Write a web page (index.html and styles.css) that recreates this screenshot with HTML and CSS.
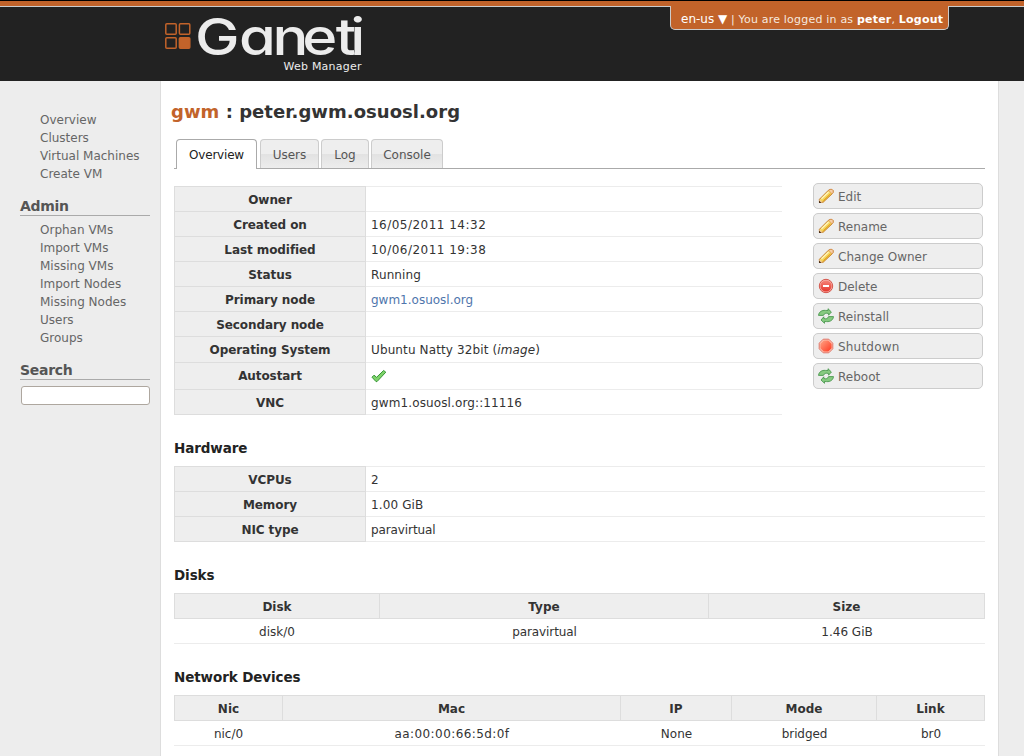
FILE: index.html
```html
<!DOCTYPE html>
<html lang="en">
<head>
<meta charset="utf-8">
<title>Ganeti Web Manager</title>
<link rel="stylesheet" href="styles.css">
</head>
<body>
<svg class="defs" width="0" height="0">
  <defs>
    <linearGradient id="gold" x1="0" y1="0" x2="1" y2="1"><stop offset="0" stop-color="#fff3a0"/><stop offset="1" stop-color="#edb620"/></linearGradient>
    <linearGradient id="red" x1="0" y1="0" x2="1" y2="1"><stop offset="0" stop-color="#ffa485"/><stop offset="1" stop-color="#ff3820"/></linearGradient>
    <linearGradient id="crimson" x1="0" y1="0" x2="0" y2="1"><stop offset="0" stop-color="#f58478"/><stop offset="1" stop-color="#e5372e"/></linearGradient>
    <symbol id="pencil" viewBox="0 0 16 16">
      <path d="M1.4 14.4V11.3L10.5 2.2L12 1.4H14L15.1 2.5V4.3L14.3 5.6L5.2 14.2Z" fill="url(#gold)" stroke="#c57a25"/>
      <path d="M10.6 2.3L12 1.5H14L15 2.6V4.3L13.9 5.6Z" fill="#f7cfa8" stroke="#d58b52" stroke-width=".6"/>
      <path d="M3.5 10.8L10.5 4" stroke="#fff7bd" stroke-width="1.2"/>
      <path d="M5.3 12.8L12.3 6" stroke="#e2a619" stroke-width="1"/>
      <path d="M1.3 11.5L4.6 14.3L1 15Z" fill="#f3cda0"/>
      <path d="M1 12.5L3.4 15H1Z" fill="#4b2c13"/>
    </symbol>
    <symbol id="minus" viewBox="0 0 16 16">
      <circle cx="8" cy="8" r="6.7" fill="#f7b1a8" stroke="#d4564c"/>
      <circle cx="8" cy="8" r="5.6" fill="url(#crimson)"/>
      <rect x="5" y="7" width="6" height="2" fill="#fff"/>
    </symbol>
    <symbol id="stop" viewBox="0 0 16 16">
      <path d="M5.2 1.2H10.8L14.8 5.2V10.8L10.8 14.8H5.2L1.2 10.8V5.2Z" fill="#ffc3b0" stroke="#dd6a5c" stroke-width=".9"/>
      <path d="M5.7 2.4H10.3L13.6 5.7V10.3L10.3 13.6H5.7L2.4 10.3V5.7Z" fill="url(#red)"/>
    </symbol>
    <symbol id="cycle" viewBox="0 0 16 16">
      <path d="M.5 7.4C.8 3.9 4 2 7.3 2.4L10 2.5V.7L13.4 4L10.6 7.2V5.6C7.8 4.7 6.4 5.3 5.4 7.4Z" fill="#86ca80" stroke="#3f9144" stroke-width=".8" stroke-linejoin="round"/>
      <path d="M15.5 8.6C15.2 12.1 12 14 8.7 13.6L6.5 13.5V15.3L3 12L5.8 8.8V10.4C8.2 11.3 9.6 10.7 10.6 8.6Z" fill="#86ca80" stroke="#3f9144" stroke-width=".8" stroke-linejoin="round"/>
    </symbol>
    <symbol id="tick" viewBox="0 0 16 16">
      <path d="M1 9.2L3 7.2L5.6 9.3L12.6 2.5L14.8 4.2L6 13.6H5Z" fill="#7fd36a" stroke="#349535" stroke-linejoin="round"/>
    </symbol>
  </defs>
</svg>
<header class="header">
  <div class="logo">
    <svg width="200" height="70" viewBox="0 0 200 70">
      <g fill="none" stroke="#c2632a" stroke-width="1.5">
        <rect x="1.8" y="17.8" width="10.4" height="10.4" rx="1"/>
        <rect x="15.4" y="17.8" width="10.4" height="10.4" rx="1"/>
        <rect x="1.8" y="31.8" width="10.4" height="10.4" rx="1"/>
        <rect x="15.4" y="31.8" width="10.4" height="10.4" rx="1" fill="#c2632a"/>
      </g>
      <text class="wordmark" transform="scale(1.17 1)" x="26.5 64.2 92.8 118.2 146.8 159.3" y="48.6">Ganeti</text>
      <text class="tagline" x="119.5" y="63.5" textLength="78">Web Manager</text>
    </svg>
  </div>
  <div class="user"><span class="lang">en-us ▼</span> | You are logged in as <b>peter</b>, <b>Logout</b></div>
</header>
<div class="page">
  <nav class="sidebar">
    <ul><li>Overview</li><li>Clusters</li><li>Virtual Machines</li><li>Create VM</li></ul>
    <h3>Admin</h3>
    <ul><li>Orphan VMs</li><li>Import VMs</li><li>Missing VMs</li><li>Import Nodes</li><li>Missing Nodes</li><li>Users</li><li>Groups</li></ul>
    <h3>Search</h3>
    <input class="search" type="text" aria-label="Search">
  </nav>
  <main class="content">
    <h1><span>gwm</span> : peter.gwm.osuosl.org</h1>
    <div class="tabs"><a class="tab active">Overview</a><a class="tab users">Users</a><a class="tab log">Log</a><a class="tab console">Console</a></div>
    <div class="top">
      <table class="props">
        <tr><th>Owner</th><td></td></tr>
        <tr><th>Created on</th><td class="date">16/05/2011 14:32</td></tr>
        <tr><th>Last modified</th><td class="date">10/06/2011 19:38</td></tr>
        <tr><th>Status</th><td class="loose">Running</td></tr>
        <tr><th>Primary node</th><td><a class="link">gwm1.osuosl.org</a></td></tr>
        <tr><th>Secondary node</th><td></td></tr>
        <tr class="os"><th>Operating System</th><td class="loose">Ubuntu Natty 32bit (<i>image</i>)</td></tr>
        <tr class="auto"><th>Autostart</th><td><svg class="icon"><use href="#tick"/></svg></td></tr>
        <tr><th>VNC</th><td class="loose">gwm1.osuosl.org::11116</td></tr>
      </table>
      <div class="actions">
        <a class="action"><svg class="icon"><use href="#pencil"/></svg>Edit</a>
        <a class="action"><svg class="icon"><use href="#pencil"/></svg>Rename</a>
        <a class="action"><svg class="icon"><use href="#pencil"/></svg>Change Owner</a>
        <a class="action"><svg class="icon"><use href="#minus"/></svg>Delete</a>
        <a class="action"><svg class="icon"><use href="#cycle"/></svg>Reinstall</a>
        <a class="action shutdown"><svg class="icon"><use href="#stop"/></svg>Shutdown</a>
        <a class="action"><svg class="icon"><use href="#cycle"/></svg>Reboot</a>
      </div>
    </div>
    <h2>Hardware</h2>
    <table class="props wide">
      <tr><th>VCPUs</th><td>2</td></tr>
      <tr><th>Memory</th><td class="loose">1.00 GiB</td></tr>
      <tr><th>NIC type</th><td class="tight">paravirtual</td></tr>
    </table>
    <h2>Disks</h2>
    <table class="list">
      <colgroup><col class="disk"><col class="type"><col></colgroup>
      <tr><th>Disk</th><th>Type</th><th>Size</th></tr>
      <tr><td>disk/0</td><td class="tight">paravirtual</td><td>1.46 GiB</td></tr>
    </table>
    <h2>Network Devices</h2>
    <table class="list">
      <colgroup><col class="nic"><col class="mac"><col class="ip"><col class="mode"><col></colgroup>
      <tr><th>Nic</th><th>Mac</th><th>IP</th><th>Mode</th><th>Link</th></tr>
      <tr><td>nic/0</td><td class="address">aa:00:00:66:5d:0f</td><td>None</td><td class="tight">bridged</td><td>br0</td></tr>
    </table>
  </main>
</div>
</body>
</html>
```
FILE: styles.css
```css
* { box-sizing: border-box; }
html, body { height: 756px; overflow: hidden; }
body { margin: 0; background: #ededed; color: #333; font: 12px/18px "DejaVu Sans", sans-serif; }
.defs { position: absolute; }
.header { height: 81px; background: linear-gradient(#000 0 1px, #c2632a 1px 6px, #ccc 6px 7px, #222 7px); display: flex; align-items: flex-start; padding: 6px 75px 0 164px; justify-content: space-between; }
.logo svg { display: block; overflow: visible; }
.wordmark { font: 500 51px Inter, sans-serif; font-feature-settings: "cv11"; fill: #ececec; }
.tagline { font: 11px "DejaVu Sans", sans-serif; fill: #ececec; }
.user { width: 279px; height: 24px; background: #c2632a; border: 1px solid #ccc; border-top: 0; border-radius: 0 0 5px 5px; color: #f5e8df; font-size: 11px; letter-spacing: 0.2px; line-height: 26px; padding-left: 10px; white-space: nowrap; }
.user b { color: #fff; }
.lang { font-size: 12px; letter-spacing: 0; color: #fff; }
.page { display: flex; height: 675px; }
.sidebar { width: 160px; padding: 30px 10px 0 20px; color: #666; }
.sidebar ul { list-style: none; margin: 0; padding: 0 0 0 20px; }
.sidebar h3 { font-size: 14px; line-height: 18px; height: 19px; margin: 14px 0 5px; border-bottom: 1px solid #aaa; color: #555; letter-spacing: -0.3px; }
.sidebar h3 + .search { margin-top: 6px; }
.search { display: block; width: 129px; height: 19px; margin-left: 1px; border: 1px solid #aea79f; border-radius: 3px; background: #fff; }
.content { width: 839px; background: #fff; border: solid #ddd; border-width: 0 1px; padding: 20px 13px 0; }
h1 { margin: 0 0 0 -3px; font-size: 18px; line-height: 22px; color: #333; letter-spacing: 0.03px; }
h1 span { color: #c2632a; }
.tabs { display: flex; gap: 2px; height: 30px; margin-top: 16px; padding-left: 2px; border-bottom: 1px solid #aaa; }
.tab { height: 29px; line-height: 30px; text-align: center; border: 1px solid #ccc; border-bottom: 0; border-radius: 4px 4px 0 0; background: linear-gradient(#eee 50%, #e2e2e2 50%, #ededed); color: #555; }
.active { width: 81px; height: 30px; background: #fff; border-color: #aaa; color: #222; margin-right: 1px; letter-spacing: -0.2px; }
.users { width: 59px; }
.log { width: 48px; }
.console { width: 72px; }
.top { display: flex; justify-content: space-between; padding: 14px 2px 0 0; }
table { border-collapse: separate; border-spacing: 0; table-layout: fixed; }
.props { width: 608px; margin-top: 3px; border-top: 1px solid #ececec; }
.props tr { height: 25px; }
.props .os { height: 26px; }
.props .auto { height: 27px; }
th, td { padding: 2px 5px 0; height: inherit; border-bottom: 1px solid #ececec; text-align: left; line-height: 17px; }
.os th, .os td { padding-top: 1px; }
.auto th, .auto td { padding-top: 0; }
th { background: #eee; border-bottom-color: #ddd; text-align: center; }
.props th { width: 192px; border-left: 1px solid #ddd; border-right: 1px solid #ddd; letter-spacing: -0.08px; }
.props tr:first-child th { box-shadow: 0 -1px #ddd; }
.wide { width: 811px; margin-top: 0; }
.link { color: #4f76ac; }
.date { letter-spacing: 0.48px; }
.address { letter-spacing: 0.42px; }
.loose { letter-spacing: 0.12px; }
.tight { letter-spacing: -0.1px; }
.icon { width: 16px; height: 16px; display: block; }
.actions { width: 170px; display: flex; flex-direction: column; gap: 4px; }
.action { height: 26px; border: 1px solid #ccc; border-radius: 5px; background: #eee; display: flex; align-items: center; gap: 4px; padding: 1px 0 0 4px; color: #666; }
.action .icon { margin-top: -1px; }
.shutdown { letter-spacing: 0.2px; }
h2 { font-size: 13.5px; line-height: 18px; margin: 24px 0 9px; color: #222; letter-spacing: -0.1px; }
.list { width: 811px; }
.list tr { height: 25px; }
.list tr:first-child { height: 26px; }
.list td { text-align: center; }
.list th { border-top: 1px solid #ddd; border-right: 1px solid #ddd; }
.list th:first-child { border-left: 1px solid #ddd; }
.disk { width: 206px; }
.type { width: 329px; }
.nic { width: 109px; }
.mac { width: 338px; }
.ip { width: 111px; }
.mode { width: 145px; }
```
